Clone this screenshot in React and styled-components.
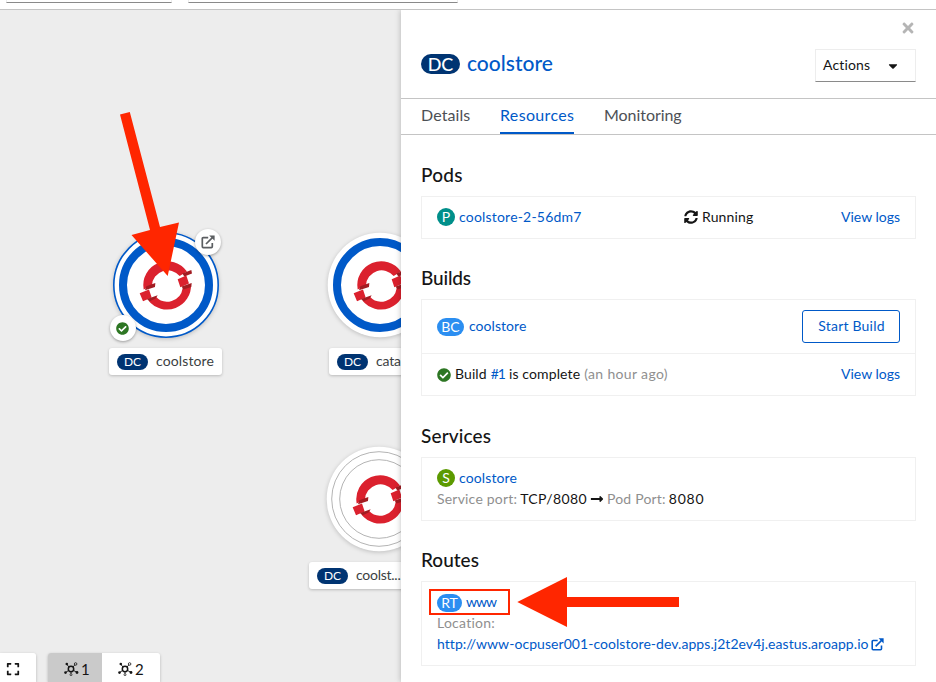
import React from "react";
import styled, { createGlobalStyle, css } from "styled-components";
import {
  FaSyncAlt,
  FaCheckCircle,
  FaLongArrowAltRight,
  FaCaretDown,
  FaTimes,
  FaExpand,
} from "react-icons/fa";

const color = {
  link: "#0059c8",
  text: "#151515",
  muted: "#8f8f8f",
  tab: "#4d5055",
  navy: "#003472",
  blue: "#2b8ef1",
  teal: "#008f8a",
  lime: "#5c9a00",
  green: "#2d7623",
  rule: "#c4c4c4",
  faint: "#f0f0f0",
  canvas: "#ededed",
  red: "#ff2600",
};

const GlobalStyle = createGlobalStyle`
  * { box-sizing: border-box; }
  body {
    margin: 0;
    overflow: hidden;
    background: #fff;
    color: ${color.text};
    font: 14px/21px Lato, "Open Sans", sans-serif;
  }
`;

const Page = styled.div`
  position: relative;
  display: flex;
  flex-direction: column;
  width: 936px;
  height: 682px;
  overflow: hidden;
`;

const FilterBar = styled.header`
  display: flex;
  flex: none;
  gap: 16px;
  height: 10px;
  padding-left: 6px;
  border-bottom: 1px solid ${color.rule};
`;

const FilterField = styled.div`
  width: ${(p) => p.$width}px;
  height: 3px;
  border: 1px solid #ededed;
  border-top: 0;
  border-bottom-color: #8a8a8a;
`;

const Workspace = styled.main`
  display: flex;
  flex: 1;
  min-height: 0;
`;

/* Topology canvas */

const Canvas = styled.section`
  position: relative;
  flex: none;
  width: 401px;
  overflow: hidden;
  background: ${color.canvas};
`;

const NodeGraphic = styled.svg`
  position: absolute;
  left: ${(p) => p.$x - 60}px;
  top: ${(p) => p.$y - 70}px;
  width: 120px;
  height: 120px;
  filter: drop-shadow(0 1px 2px rgba(0, 0, 0, 0.2));
`;

const NodeLabel = styled.div`
  position: absolute;
  left: ${(p) => p.$x}px;
  top: ${(p) => p.$y - 10}px;
  display: flex;
  align-items: center;
  gap: 8px;
  width: 113px;
  height: 27px;
  padding-left: 8px;
  border-radius: 3px;
  background: #fff;
  color: #3c3f42;
  letter-spacing: ${(p) => p.$track}px;
  white-space: nowrap;
  box-shadow: 0 1px 3px rgba(0, 0, 0, 0.22);
`;

const Decorator = styled.div`
  position: absolute;
  left: ${(p) => p.$x - 13}px;
  top: ${(p) => p.$y - 23}px;
  display: grid;
  place-items: center;
  width: 26px;
  height: 26px;
  border-radius: 50%;
  background: #fff;
  color: ${(p) => p.$tone};
  font-size: 13px;
  box-shadow: 0 1px 3px rgba(0, 0, 0, 0.35);
`;

const CanvasControls = styled.div`
  position: absolute;
  left: 0;
  bottom: 0;
  display: flex;
  gap: 12px;
`;

const ControlGroup = styled.div`
  display: flex;
  overflow: hidden;
  border-radius: ${(p) => (p.$flush ? "0 3px 0 0" : "3px 3px 0 0")};
  box-shadow: 0 1px 3px rgba(0, 0, 0, 0.25);
`;

const ControlButton = styled.button`
  display: flex;
  align-items: center;
  gap: 2px;
  width: ${(p) => p.$width}px;
  height: 29px;
  padding: 3px 0 0 ${(p) => p.$inset}px;
  border: 0;
  background: ${(p) => (p.$active ? "#cacaca" : "#fff")};
  color: ${color.text};
  font: 15px/20px Lato, sans-serif;
`;

/* Side panel */

const Panel = styled.aside`
  position: relative;
  display: flex;
  flex: 1;
  flex-direction: column;
  background: #fff;
  box-shadow: 0 0 6px rgba(0, 0, 0, 0.25);
  clip-path: inset(0 0 0 -10px);
`;

const PanelHeader = styled.div`
  display: flex;
  flex: none;
  flex-direction: column;
  height: 89px;
  padding: 10px 20px 0;
  border-bottom: 1px solid ${color.rule};
`;

const CloseButton = styled.button`
  display: flex;
  align-self: flex-end;
  padding: 0;
  border: 0;
  background: none;
  color: #b5b5b5;
  font-size: 16px;
  line-height: 1;
`;

const TitleRow = styled.div`
  display: flex;
  justify-content: space-between;
  margin-top: 13px;
`;

const Title = styled.h1`
  display: flex;
  align-items: center;
  gap: 7px;
  height: 30px;
  margin: 0;
  color: ${color.link};
  font-size: 21px;
  font-weight: 500;
`;

const TitleText = styled.span`
  padding-bottom: 4px;
`;

const ActionsMenu = styled.button`
  display: flex;
  align-items: center;
  justify-content: space-between;
  width: 101px;
  height: 33px;
  padding: 0 15px 0 7px;
  border: 1px solid #ededed;
  border-bottom-color: #8a8a8a;
  background: #fff;
  color: ${color.text};
  font: 14px/21px Lato, sans-serif;
`;

const Tabs = styled.nav`
  display: flex;
  flex: none;
  height: 36px;
  padding-left: 20px;
  border-bottom: 1px solid ${color.rule};
`;

const Tab = styled.span`
  width: ${(p) => p.$width}px;
  height: 35px;
  margin-right: 30px;
  color: ${color.tab};
  font-size: 16px;
  line-height: 32px;
  letter-spacing: ${(p) => p.$track}px;
  white-space: nowrap;
  ${(p) =>
    p.$active &&
    css`
      color: ${color.link};
      border-bottom: 2px solid ${color.link};
    `}
`;

const PanelBody = styled.div`
  display: flex;
  flex-direction: column;
  padding: 0 20px;
`;

const SectionTitle = styled.h2`
  height: 60.5px;
  margin: 0;
  padding-top: 28.5px;
  font-size: 19px;
  font-weight: 500;
  line-height: 22px;
  letter-spacing: ${(p) => p.$track || 0}px;
`;

const Card = styled.div`
  display: flex;
  flex-direction: column;
  border: 1px solid ${color.faint};
`;

const CardItem = styled.div`
  display: flex;
  flex-direction: column;
  justify-content: center;
  padding: 10px 15px;
  & + & {
    border-top: 1px solid ${color.faint};
  }
`;

const Columns = styled.div`
  display: grid;
  grid-template-columns: ${(p) => p.$template || "1fr auto"};
  grid-auto-rows: minmax(21px, auto);
  align-items: center;
`;

const Line = styled.div`
  display: flex;
  align-items: center;
  gap: ${(p) => p.$gap ?? 4}px;
  height: 21px;
  white-space: nowrap;
`;

/* Lato sits low in its line box; the bottom padding centres it on the badges. */
const Text = styled.span`
  padding-bottom: 2px;
  color: ${(p) => (p.$muted ? color.muted : "inherit")};
  line-height: 19px;
  letter-spacing: ${(p) => p.$track || 0}px;
`;

const Link = styled.a`
  padding-bottom: 2px;
  color: ${color.link};
  line-height: 19px;
  letter-spacing: ${(p) => p.$track || 0}px;
  text-decoration: none;
`;

const OutlineButton = styled.button`
  width: 98px;
  height: 33px;
  padding: 0 0 2px 1px;
  border: 1px solid ${color.link};
  border-radius: 3px;
  background: #fff;
  color: ${color.link};
  font: 14px/21px Lato, sans-serif;
  letter-spacing: 0.2px;
`;

const badgeSizes = {
  small: css`
    height: 16px;
    font-size: 12px;
  `,
  medium: css`
    height: 18px;
    font-size: 14px;
  `,
  large: css`
    height: 20px;
    padding-bottom: 1px;
    font-size: 18px;
    font-weight: 500;
  `,
};

const Badge = styled.span`
  display: inline-flex;
  flex: none;
  align-items: center;
  justify-content: center;
  width: ${(p) => p.$width}px;
  border-radius: 10px;
  background: ${(p) => p.$fill};
  color: #fff;
  font-weight: 400;
  letter-spacing: 0;
  line-height: 1;
  ${(p) => badgeSizes[p.$size || "medium"]}
`;

const IconBox = styled.span`
  display: flex;
  color: ${(p) => p.$tone || color.text};
  font-size: ${(p) => p.$size || 14}px;
`;

const Annotations = styled.svg`
  position: absolute;
  inset: 0;
  width: 936px;
  height: 682px;
  pointer-events: none;
`;

function ExternalIcon({ size = 13 }) {
  return (
    <svg width={size} height={size} viewBox="0 0 14 14" fill="none" stroke="currentColor" strokeWidth="1.7">
      <path d="M7.2 2.6H2.3a1 1 0 0 0-1 1v8a1 1 0 0 0 1 1h8a1 1 0 0 0 1-1V8" />
      <path d="M5 9 11.4 2.6" />
      <path d="M8.2.4h5.4v5.4z" fill="currentColor" stroke="none" />
    </svg>
  );
}

function TopologyIcon() {
  return (
    <svg width="15" height="14" viewBox="0 0 15 14" fill="none" stroke="currentColor">
      <circle cx="7" cy="7" r="2.7" strokeWidth="1.5" />
      <path d="M5 5 2.8 2.4M9 5l2-2.3M4.6 8.5 1.8 10.3M9.4 8.4l3.2 1.8M7 9.8v2" strokeWidth="0.9" />
      <circle cx="2.8" cy="2" r="1.3" fill="currentColor" stroke="none" />
      <circle cx="11.6" cy="2" r="1.3" strokeWidth="0.8" />
      <circle cx="1.5" cy="10.6" r="1.3" fill="currentColor" stroke="none" />
      <circle cx="13" cy="10.5" r="1.4" fill="currentColor" stroke="none" />
      <circle cx="7" cy="12.7" r="1" strokeWidth="0.7" />
    </svg>
  );
}

function OpenShiftLogo() {
  return (
    <g transform="translate(61 60.6) scale(.3333)">
      <path
        fill="#db212e"
        d="M-70 12A72 72 0 0 1 60-42L38-29A47 47 0 0 0-45-1ZM72-4A72 72 0 0 1-56 45L-34 33A47 47 0 0 0 47 8ZM-82 23-54 12-46 36-72 47ZM32-19 58-30 66-6 40 5Z"
      />
      <path
        fill="#a21c22"
        d="M-62 2-35-8-36 4-66 14ZM-60 40-28 29-34 39-52 47ZM46-36 73-47 75-36 52-27ZM44 3 74-8 73 4 49 12Z"
      />
    </g>
  );
}

function TopologyNode({ x, y, variant }) {
  return (
    <NodeGraphic $x={x} $y={y} viewBox="0 0 120 120">
      <circle cx="60" cy="60" r="52.3" fill="#fff" />
      {variant === "selected" && (
        <circle cx="60" cy="60" r="52.2" fill="none" stroke={color.link} strokeWidth="1.6" />
      )}
      {variant === "idle" ? (
        <g fill="none" stroke="#b4b4b4" strokeWidth="1">
          <circle cx="60" cy="60" r="47.3" />
          <circle cx="60" cy="60" r="39.3" />
        </g>
      ) : (
        <circle cx="60" cy="60" r="43" fill="none" stroke={color.link} strokeWidth="8" />
      )}
      <OpenShiftLogo />
    </NodeGraphic>
  );
}

function DeploymentLabel({ x, y, track = 0.12, children }) {
  return (
    <NodeLabel $x={x} $y={y} $track={track}>
      <Badge $size="small" $width={31} $fill={color.navy}>DC</Badge>
      <Text $track={track}>{children}</Text>
    </NodeLabel>
  );
}

export default function App() {
  return (
    <Page>
      <GlobalStyle />
      <FilterBar>
        <FilterField $width={166} />
        <FilterField $width={270} />
      </FilterBar>
      <Workspace>
        <Canvas>
          <TopologyNode x={165.6} y={285} variant="selected" />
          <TopologyNode x={379.6} y={285} />
          <TopologyNode x={379} y={499.3} variant="idle" />
          <DeploymentLabel x={109} y={348}>coolstore</DeploymentLabel>
          <DeploymentLabel x={329} y={348} track={-0.15}>cata</DeploymentLabel>
          <DeploymentLabel x={309} y={562} track={-0.25}>coolst...</DeploymentLabel>
          <Decorator $x={208} $y={242} $tone="#5b5e61">
            <ExternalIcon size={14} />
          </Decorator>
          <Decorator $x={122.5} $y={328} $tone={color.green}>
            <FaCheckCircle />
          </Decorator>
          <CanvasControls>
            <ControlGroup $flush>
              <ControlButton $width={36} $inset={6}>
                <FaExpand size={14} />
              </ControlButton>
            </ControlGroup>
            <ControlGroup>
              <ControlButton $active $width={54} $inset={16}>
                <TopologyIcon />1
              </ControlButton>
              <ControlButton $width={58} $inset={16}>
                <TopologyIcon />2
              </ControlButton>
            </ControlGroup>
          </CanvasControls>
        </Canvas>

        <Panel>
          <PanelHeader>
            <CloseButton aria-label="Close"><FaTimes /></CloseButton>
            <TitleRow>
              <Title>
                <Badge $size="large" $width={39} $fill={color.navy}>DC</Badge>
                <TitleText>coolstore</TitleText>
              </Title>
              <ActionsMenu>
                <Text $track={0.15}>Actions</Text>
                <FaCaretDown size={14} />
              </ActionsMenu>
            </TitleRow>
          </PanelHeader>
          <Tabs>
            <Tab $width={49} $track={0.1}>Details</Tab>
            <Tab $width={74} $track={0.35} $active>Resources</Tab>
            <Tab $width={80} $track={-0.05}>Monitoring</Tab>
          </Tabs>
          <PanelBody>
            <SectionTitle $track={0.25}>Pods</SectionTitle>
            <Card>
              <CardItem>
                <Columns $template="247px 1fr auto">
                  <Line>
                    <Badge $width={18} $fill={color.teal}>P</Badge>
                    <Link $track={0.2}>coolstore-2-56dm7</Link>
                  </Line>
                  <Line>
                    <IconBox><FaSyncAlt /></IconBox>
                    <Text $track={0.15}>Running</Text>
                  </Line>
                  <Link>View logs</Link>
                </Columns>
              </CardItem>
            </Card>

            <SectionTitle $track={-0.15}>Builds</SectionTitle>
            <Card>
              <CardItem>
                <Columns>
                  <Line $gap={5}>
                    <Badge $width={27} $fill={color.blue}>BC</Badge>
                    <Link $track={0.05}>coolstore</Link>
                  </Line>
                  <OutlineButton>Start Build</OutlineButton>
                </Columns>
              </CardItem>
              <CardItem>
                <Columns>
                  <Line>
                    <IconBox $tone={color.green}><FaCheckCircle /></IconBox>
                    <Text $track={0.1}>Build</Text>
                    <Link $track={-1}>#1</Link>
                    <Text $track={0.12}>is complete</Text>
                    <Text $muted $track={0.35}>(an hour ago)</Text>
                  </Line>
                  <Link>View logs</Link>
                </Columns>
              </CardItem>
            </Card>

            <SectionTitle $track={0.15}>Services</SectionTitle>
            <Card>
              <CardItem>
                <Line>
                  <Badge $width={18} $fill={color.lime}>S</Badge>
                  <Link $track={0.12}>coolstore</Link>
                </Line>
                <Line $gap={3}>
                  <Text $muted $track={0.2}>Service port:</Text>
                  <Text $track={0.38}>TCP/8080</Text>
                  <IconBox $size={14}><FaLongArrowAltRight /></IconBox>
                  <Text $muted $track={0.2}>Pod Port:</Text>
                  <Text $track={0.8}>8080</Text>
                </Line>
              </CardItem>
            </Card>

            <SectionTitle>Routes</SectionTitle>
            <Card>
              <CardItem>
                <Line>
                  <Badge $width={25} $fill={color.blue}>RT</Badge>
                  <Link $track={-1}>www</Link>
                </Line>
                <Line>
                  <Text $muted $track={0.25}>Location:</Text>
                </Line>
                <Line $gap={2}>
                  <Link $track={0.055}>
                    http://www-ocpuser001-coolstore-dev.apps.j2t2ev4j.eastus.aroapp.io
                  </Link>
                  <IconBox $tone={color.link}><ExternalIcon size={13} /></IconBox>
                </Line>
              </CardItem>
            </Card>
          </PanelBody>
        </Panel>
      </Workspace>

      <Annotations viewBox="0 0 936 682" fill={color.red}>
        <path d="M120 114.5 129.8 112 160 227 179 222.5 167.7 276 131.5 235 150 230Z" />
        <path d="M517.3 602 567 577V597H679V607H567V627Z" />
        <rect x="430" y="590" width="79" height="24" fill="none" stroke={color.red} strokeWidth="2" />
      </Annotations>
    </Page>
  );
}
